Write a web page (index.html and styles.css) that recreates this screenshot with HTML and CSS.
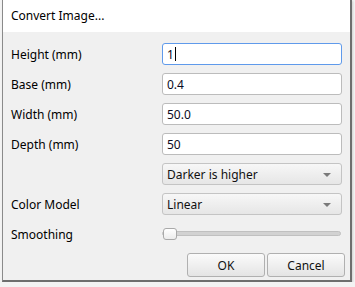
FILE: index.html
```html
<!DOCTYPE html>
<html lang="en">
<head>
    <meta charset="UTF-8">
    <title>Convert Image...</title>
    <link rel="stylesheet" href="styles.css">
</head>
<body>
    <div class="window">
        <div class="titlebar">Convert Image...</div>
        <div class="content">
            <div class="form">
                <label class="label">Height (mm)</label>
                <div class="field focused">1<span class="caret"></span></div>

                <label class="label">Base (mm)</label>
                <div class="field">0.4</div>

                <label class="label">Width (mm)</label>
                <div class="field">50.0</div>

                <label class="label">Depth (mm)</label>
                <div class="field">50</div>

                <span class="label"></span>
                <div class="combo">Darker is higher<span class="arrow"></span></div>

                <label class="label">Color Model</label>
                <div class="combo">Linear<span class="arrow"></span></div>

                <label class="label">Smoothing</label>
                <div class="slider">
                    <div class="groove"><div class="fill"></div></div>
                    <div class="handle"></div>
                </div>
            </div>
            <div class="buttons">
                <button class="btn">OK</button>
                <button class="btn">Cancel</button>
            </div>
        </div>
    </div>
</body>
</html>
```

FILE: styles.css
```css
body {
    margin: 0;
    padding: 0;
    background: #f3f3f3;
    font-family: "Noto Sans", "Open Sans", sans-serif;
    font-size: 12px;
    color: #000;
}

.window {
    margin-left: 2px;
    width: 347px;
    height: 280px;
    border-left: 1px solid #8a8a8a;
    border-right: 2px solid #6e6e6e;
    border-bottom: 2px solid #6e6e6e;
    background: #f0f0f0;
    display: flex;
    flex-direction: column;
    box-shadow: 1px 1px 2px rgba(0, 0, 0, 0.15);
}

.titlebar {
    height: 32px;
    background: #fff;
    padding-left: 8px;
    display: flex;
    align-items: center;
    line-height: 1;
}

.content {
    padding: 11px 0 0 8px;
}

.form {
    display: grid;
    grid-template-columns: 151px 180px;
    grid-auto-rows: 22px;
    row-gap: 8px;
}

.label {
    display: flex;
    align-items: center;
}

.field {
    box-sizing: border-box;
    border: 1px solid #bcbcbc;
    border-radius: 3px;
    background: #fff;
    padding: 0 4px;
    display: flex;
    align-items: center;
    color: #0a0a1e;
}

.field.focused {
    border-color: #5f9aeb;
}

.caret {
    display: inline-block;
    width: 1px;
    height: 14px;
    background: #000;
    margin-left: 1px;
}

.combo {
    box-sizing: border-box;
    border: 1px solid #c4c4c4;
    border-radius: 3px;
    background: linear-gradient(#f7f7f7, #e6e6e6);
    padding: 0 4px;
    display: flex;
    align-items: center;
    position: relative;
    color: #111;
}

.arrow {
    position: absolute;
    right: 10px;
    top: 9px;
    width: 0;
    height: 0;
    border-left: 4px solid transparent;
    border-right: 4px solid transparent;
    border-top: 4px solid #7a7a7a;
}

.slider {
    position: relative;
}

.groove {
    position: absolute;
    left: 0;
    right: 1px;
    top: 8px;
    height: 5px;
    border-radius: 3px;
    background: #d2d2d2;
    border: 1px solid #c0c0c0;
    box-sizing: border-box;
}

.fill {
    width: 3px;
    height: 100%;
    background: #2f6fe0;
    border-radius: 2px 0 0 2px;
}

.handle {
    position: absolute;
    left: 1px;
    top: 5px;
    width: 14px;
    height: 12px;
    box-sizing: border-box;
    border: 1px solid #a9a9a9;
    border-radius: 3px;
    background: linear-gradient(#ffffff, #ececec);
}

.buttons {
    display: flex;
    justify-content: flex-end;
    gap: 2px;
    margin-top: 8px;
    padding-right: 5px;
}

.btn {
    width: 78px;
    height: 24px;
    border: 1px solid #b0b0b0;
    border-radius: 3px;
    background: linear-gradient(#fbfbfb, #e4e4e4);
    font-family: "Noto Sans", "Open Sans", sans-serif;
    font-size: 12px;
    color: #111;
    padding: 0;
}
```
